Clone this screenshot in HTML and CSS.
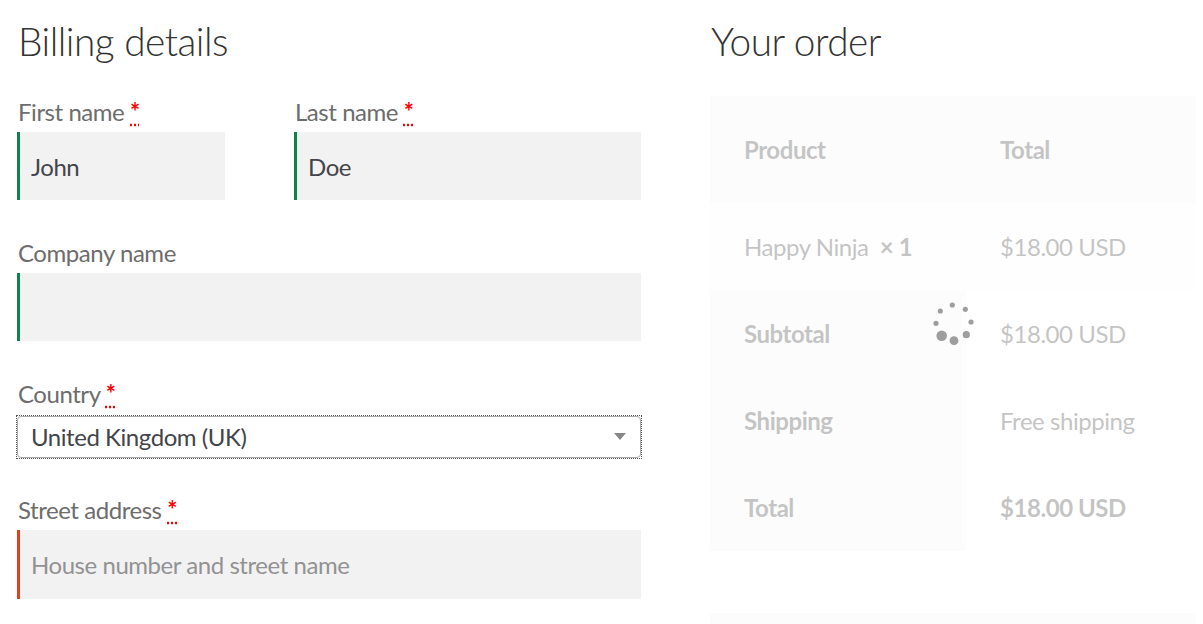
FILE: index.html
```html
<!DOCTYPE html>
<html lang="en">
<head>
<meta charset="utf-8">
<title>Checkout</title>
<link rel="stylesheet" href="styles.css">
</head>
<body>
<form class="checkout">
  <div class="billing">
    <h3 class="heading">Billing details</h3>
    <div class="row row-split">
      <p class="field">
        <label class="label">First name <abbr class="required" title="required">*</abbr></label>
        <input class="input input-valid input-short" type="text" value="John">
      </p>
      <p class="field">
        <label class="label">Last name <abbr class="required" title="required">*</abbr></label>
        <input class="input input-valid" type="text" value="Doe">
      </p>
    </div>
    <p class="field row">
      <label class="label">Company name</label>
      <input class="input input-valid" type="text" value="">
    </p>
    <p class="field row">
      <label class="label">Country <abbr class="required" title="required">*</abbr></label>
      <span class="select-focus">
        <span class="select">
          <span class="select-text">United Kingdom (UK)</span>
          <span class="select-arrow"></span>
        </span>
      </span>
    </p>
    <p class="field row">
      <label class="label">Street address <abbr class="required" title="required">*</abbr></label>
      <input class="input input-invalid" type="text" placeholder="House number and street name">
    </p>
  </div>
  <div class="order">
    <h3 class="heading">Your order</h3>
    <div class="review">
      <table class="table">
        <thead>
          <tr><th class="col-a">Product</th><th class="col-b">Total</th></tr>
        </thead>
        <tbody>
          <tr><td>Happy Ninja&nbsp; <strong class="qty">×&nbsp;1</strong></td><td>$18.00 USD</td></tr>
        </tbody>
        <tfoot>
          <tr><th>Subtotal</th><td>$18.00 USD</td></tr>
          <tr><th>Shipping</th><td>Free shipping</td></tr>
          <tr><th>Total</th><td class="strong">$18.00 USD</td></tr>
        </tfoot>
      </table>
      <div class="payment"></div>
      <div class="overlay"></div>
      <svg class="spinner" width="44" height="44" viewBox="0 0 44 44">
        <g fill="#9e9e9e">
          <circle cx="20.3" cy="4" r="2.6"/>
          <circle cx="33.3" cy="8.3" r="2.6"/>
          <circle cx="39" cy="21" r="2.6"/>
          <circle cx="34.3" cy="33.7" r="3.6"/>
          <circle cx="22" cy="39.7" r="4.4"/>
          <circle cx="9.7" cy="34.7" r="5.3"/>
          <circle cx="4" cy="22.3" r="2.6"/>
          <circle cx="8.3" cy="10" r="2.6"/>
        </g>
      </svg>
    </div>
  </div>
</form>
</body>
</html>
```

FILE: styles.css
```css
* { box-sizing: border-box; }

html, body {
  margin: 0;
  padding: 0;
  background: #ffffff;
}

body {
  font-family: "Lato", "Liberation Sans", sans-serif;
  font-size: 24px;
  line-height: 1.618;
  letter-spacing: -0.45px;
  color: #6d6d6d;
  overflow: hidden;
}

.checkout {
  display: flex;
  gap: 69px;
  padding: 10px 0 0 17px;
}

.billing {
  width: 624px;
  flex: none;
}

.order {
  width: 486px;
  flex: none;
}

.heading {
  margin: 0 0 20px 1px;
  font-size: 38.8px;
  line-height: 63px;
  font-weight: 300;
  letter-spacing: -0.5px;
  color: #333333;
}

.row {
  margin: 0 0 33.6px;
}

.row-split {
  display: grid;
  grid-template-columns: 208px 1fr;
  column-gap: 69px;
}

.field {
  display: flex;
  flex-direction: column;
  margin-top: 0;
}

.row-split .field { margin: 0; }

.label {
  display: block;
  height: 38.8px;
  line-height: 38.8px;
  padding-left: 1px;
  color: #6d6d6d;
}

.required {
  color: #ff0000;
  font-weight: 700;
  text-decoration: underline dotted #ff0000;
  text-underline-offset: 3px;
  cursor: help;
}

.input {
  display: block;
  width: 100%;
  height: 68.6px;
  margin: 0;
  padding: 0 14px 0 14px;
  border: 0;
  background: #f2f2f2;
  font-family: inherit;
  font-size: 24px;
  letter-spacing: -0.45px;
  color: #43454b;
  outline: none;
  border-radius: 0;
}

.input::placeholder {
  color: #929292;
}

.input-short { width: 208px; }

.input-valid { box-shadow: inset 3px 0 0 #0f834d; }

.input-invalid { box-shadow: inset 3px 0 0 #e2401c; }

.select-focus {
  display: block;
  margin-top: 2px;
  outline: 1px dotted #555555;
  outline-offset: 0;
}

.select {
  display: flex;
  align-items: center;
  height: 42px;
  padding: 0 14px 0 13px;
  border: 1px solid #aaaaaa;
  border-radius: 4px;
  background: #ffffff;
}

.select-text {
  flex: 1;
  color: #43454b;
  line-height: 40px;
}

.select-arrow {
  width: 0;
  height: 0;
  border-style: solid;
  border-width: 7px 6px 0 6px;
  border-color: #888888 transparent transparent transparent;
}

.review {
  position: relative;
  margin-top: 23px;
}

.table {
  width: 486px;
  border-collapse: separate;
  border-spacing: 0;
  margin: 0 0 62px;
}

.table th,
.table td {
  padding: 24px 34px;
  text-align: left;
  vertical-align: top;
  line-height: 39px;
}

.table thead th {
  padding: 34px;
  background: #f8f8f8;
  font-weight: 700;
}

.col-a { width: 256px; }

.table tbody td {
  background: #fdfdfd;
}

.table tfoot th {
  background: #f8f8f8;
  font-weight: 700;
}

.table tfoot td {
  background: #ffffff;
}

.qty { font-weight: 700; }

.strong { font-weight: 700; }

.payment {
  height: 120px;
  background: #f8f8f8;
}

.overlay {
  position: absolute;
  inset: 0;
  background: rgba(255, 255, 255, 0.6);
}

.spinner {
  position: absolute;
  left: 222px;
  top: 205px;
}
```
